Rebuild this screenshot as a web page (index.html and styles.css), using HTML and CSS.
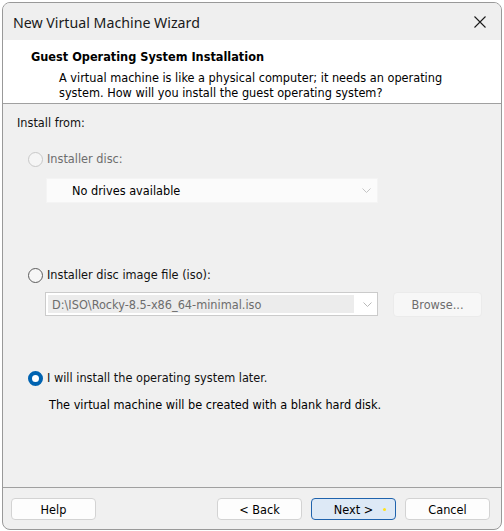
FILE: index.html
```html
<!DOCTYPE html>
<html>
<head>
<meta charset="utf-8">
<link rel="stylesheet" href="styles.css">
</head>
<body>
<div class="window">
  <div class="titlebar">
    <span class="title">New Virtual Machine Wizard</span>
    <svg class="close" width="12" height="12" viewBox="0 0 12 12"><path d="M0.5 0.5 L11.5 11.5 M11.5 0.5 L0.5 11.5" stroke="#1b1b1b" stroke-width="1.1" fill="none"/></svg>
  </div>
  <div class="header">
    <div class="h-title">Guest Operating System Installation</div>
    <div class="h-desc">A virtual machine is like a physical computer; it needs an operating<br>system. How will you install the guest operating system?</div>
  </div>
  <div class="content">
    <div class="install-label">Install from:</div>
    <div class="radio-row r1 disabled"><span class="radio radio-disabled"></span><span>Installer disc:</span></div>
    <div class="combo combo1">
      <span class="combo-text">No drives available</span>
      <svg class="chev" width="9" height="5" viewBox="0 0 9 5"><polyline points="0.5,0.5 4.5,4.5 8.5,0.5" fill="none" stroke="#c4c4c4" stroke-width="1"/></svg>
    </div>
    <div class="radio-row r2"><span class="radio"></span><span>Installer disc image file (iso):</span></div>
    <div class="iso-row">
      <div class="combo combo2">
        <span class="iso-field">D:\ISO\Rocky-8.5-x86_64-minimal.iso</span>
        <svg class="chev" width="9" height="5" viewBox="0 0 9 5"><polyline points="0.5,0.5 4.5,4.5 8.5,0.5" fill="none" stroke="#b9b9b9" stroke-width="1"/></svg>
      </div>
      <div class="browse">Browse...</div>
    </div>
    <div class="radio-row r3"><span class="radio radio-checked"></span><span>I will install the operating system later.</span></div>
    <div class="later-desc">The virtual machine will be created with a blank hard disk.</div>
  </div>
  <div class="footer">
    <div class="btn">Help</div>
    <div class="btn btn-back">&lt; Back</div>
    <div class="btn btn-next">Next &gt;<span class="dot"></span></div>
    <div class="btn">Cancel</div>
  </div>
</div>
</body>
</html>
```
FILE: styles.css
```css
html, body {
  margin: 0;
  padding: 0;
  background: #ffffff;
}
body {
  font-family: "DejaVu Sans Condensed", "DejaVu Sans", sans-serif;
  font-size: 12.6px;
  color: #111;
}
.window {
  margin: 2px 0 0 2px;
  width: 500px;
  height: 528px;
  box-sizing: border-box;
  border: 1px solid #999;
  border-radius: 8px;
  overflow: hidden;
  background: #f0f0f0;
  display: flex;
  flex-direction: column;
}
.titlebar {
  height: 37px;
  flex: none;
  display: flex;
  align-items: center;
  justify-content: space-between;
  padding: 0 15px 0 10px;
  background: #efefef;
}
.title {
  font-family: "Noto Sans", sans-serif;
  font-size: 14.2px;
  color: #1a1a1a;
  margin-top: 1px;
}
.close { display: block; margin-top: 1px; }
.header {
  flex: none;
  height: 64px;
  background: #ffffff;
  border-bottom: 1px solid #a0a0a0;
  padding: 9px 0 0 28px;
  box-sizing: border-box;
}
.h-title {
  font-weight: bold;
  line-height: 16px;
  color: #000;
}
.h-desc {
  margin: 5px 0 0 28px;
  line-height: 15px;
  color: #000;
}
.content {
  flex: 1;
  padding: 11px 0 0 14px;
  display: flex;
  flex-direction: column;
  align-items: flex-start;
}
.install-label { line-height: 16px; }
.radio-row {
  display: flex;
  align-items: center;
  gap: 4px;
  line-height: 16px;
  margin-left: 11px;
}
.r1 { margin-top: 20px; }
.r2 { margin-top: 64px; }
.r3 { margin-top: 53px; }
.disabled { color: #6d6d6d; }
.radio {
  width: 15px;
  height: 15px;
  box-sizing: border-box;
  border-radius: 50%;
  border: 1px solid #5c5c5c;
  background: #f6f6f6;
  flex: none;
}
.radio-disabled {
  border-color: #c8c8c8;
  background: #f5f5f5;
}
.radio-checked {
  border: 4.5px solid #0063b1;
  background: #ffffff;
}
.combo {
  box-sizing: border-box;
  display: flex;
  align-items: center;
  position: relative;
}
.combo1 {
  margin: 11px 0 0 29px;
  width: 332px;
  height: 25px;
  background: #fbfbfb;
  border: 1px solid #f4f4f4;
  padding-left: 25px;
}
.combo-text { color: #000; flex: 1; }
.chev { margin-right: 6px; flex: none; }
.iso-row {
  display: flex;
  align-items: flex-start;
  margin: 9px 0 0 28px;
  gap: 15px;
}
.combo2 {
  width: 333px;
  height: 24px;
  background: #ffffff;
  border: 1px solid #cbcbcb;
  padding: 2px 0 2px 2px;
  align-items: stretch;
}
.iso-field {
  width: 306px;
  flex: none;
  background: #ececec;
  color: #6d6d6d;
  padding-left: 4px;
  box-sizing: border-box;
  display: flex;
  align-items: center;
}
.combo2 .chev { align-self: center; margin-left: auto; margin-right: 5px; }
.browse {
  width: 89px;
  height: 25px;
  box-sizing: border-box;
  border: 1px solid #ebebeb;
  background: #f7f7f7;
  border-radius: 4px;
  color: #6d6d6d;
  display: flex;
  align-items: center;
  justify-content: center;
}
.later-desc {
  margin: 11px 0 0 32px;
  line-height: 16px;
  color: #000;
}
.footer {
  flex: none;
  height: 42px;
  box-sizing: border-box;
  border-top: 1px solid #a0a0a0;
  padding: 10px 11px 0 8px;
  display: flex;
  align-items: flex-start;
  gap: 9px;
}
.btn {
  width: 85px;
  height: 22px;
  box-sizing: border-box;
  border: 1px solid #d3d3d3;
  border-radius: 4px;
  background: #fdfdfd;
  display: flex;
  align-items: center;
  justify-content: center;
  color: #000;
  position: relative;
}
.btn-back { margin-left: auto; }
.btn-next {
  background: #dde9f6;
  border-color: #1f63ad;
}
.dot {
  position: absolute;
  left: 71px;
  top: 9px;
  width: 3px;
  height: 3px;
  border-radius: 50%;
  background: #ffe31a;
}
```
